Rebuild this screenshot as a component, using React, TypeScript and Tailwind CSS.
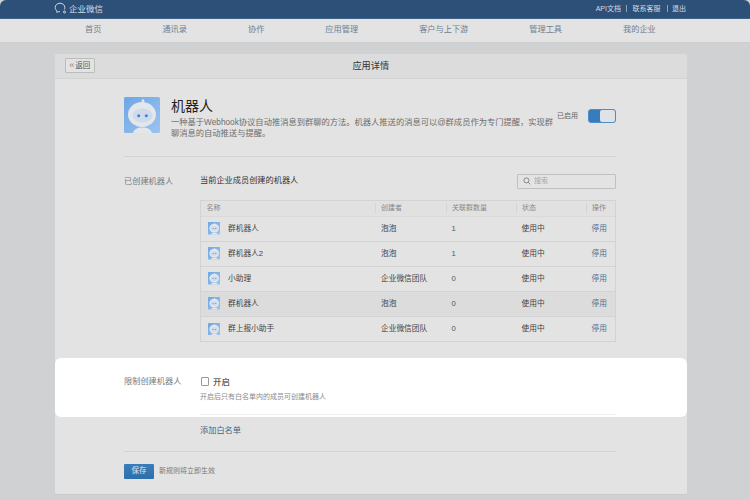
import React from "react";

const F = "font-['Liberation_Sans','Noto_Sans_CJK_SC',sans-serif]";

function Robot({ size, className = "" }: { size: number; className?: string }) {
  return (
    <svg width={size} height={size} viewBox="0 0 36 36" className={className}>
      <defs>
        <linearGradient id="rb" x1="0" y1="0" x2="1" y2="1">
          <stop offset="0" stopColor="#6ea6e6" />
          <stop offset="1" stopColor="#9cc3ee" />
        </linearGradient>
      </defs>
      <rect width="36" height="36" rx="1.5" fill="url(#rb)" />
      <circle cx="19" cy="3.700" r="1.500" fill="#e3e6ea" />
      <rect x="18.600" y="4.500" width="0.800" height="2" fill="#e3e6ea" />
      <path d="M9 36c1-3.500 4-5.500 9.500-5.500s8.500 2 9.500 5.500z" fill="#e3e6ea" />
      <ellipse cx="18" cy="17.500" rx="14" ry="12.500" fill="#e3e6ea" />
      <ellipse cx="18.500" cy="18.500" rx="10" ry="7" fill="#cfdbea" />
      <circle cx="14.700" cy="18.700" r="1.500" fill="#3f80dc" />
      <circle cx="22.300" cy="18.700" r="1.500" fill="#3f80dc" />
    </svg>
  );
}

const rows = [
  { name: "群机器人", by: "泡泡", n: "1", hl: false },
  { name: "群机器人2", by: "泡泡", n: "1", hl: false },
  { name: "小助理", by: "企业微信团队", n: "0", hl: false },
  { name: "群机器人", by: "泡泡", n: "0", hl: true },
  { name: "群上报小助手", by: "企业微信团队", n: "0", hl: false },
];

const nav = ["首页", "通讯录", "协作", "应用管理", "客户与上下游", "管理工具", "我的企业"];

export default function App() {
  return (
    <div className={`${F} relative w-[750px] h-[500px] overflow-hidden bg-[#d0d1d3] text-[8.200px] leading-[12px] text-[#3b3b3b]`}>
      <header className="h-[18.500px] bg-[#2c5078] rounded-t-[6px] flex items-center justify-between pl-[54px] pr-[64px] border-b border-[#3f6288]">
        <div className="flex items-center gap-[1px] text-[#d5dbe3] text-[8.500px]">
          <svg width="14" height="13" viewBox="0 0 14 13" fill="none" stroke="#d5dbe3" strokeWidth="1">
            <path d="M6 1.200c-2.700 0-4.800 1.900-4.800 4.300 0 1.400.7 2.600 1.800 3.400l-.2 1.500 1.700-.8c.5.100 1 .2 1.500.2" />
            <path d="M6 1.200c2.700 0 4.800 1.900 4.800 4.300 0 .7-.2 1.400-.5 2" />
            <circle cx="10.500" cy="10" r="1" />
          </svg>
          <span>企业微信</span>
        </div>
        <div className="flex items-center text-[#d5dbe3] text-[7px]">
          <span>API文档</span>
          <span className="ml-[4.500px] mr-[6px] w-px h-[7px] bg-[#8ea3bb]" />
          <span>联系客服</span>
          <span className="ml-[6px] mr-[4.500px] w-px h-[7px] bg-[#8ea3bb]" />
          <span>退出</span>
        </div>
      </header>
      <nav className="h-[24px] bg-[#e3e3e3] border-b border-[#cdcecf] flex items-center gap-[61px] pl-[85px] text-[8.200px] text-[#6f7e92]">
        {nav.map((t) => (
          <div key={t} className="shrink-0">{t}</div>
        ))}
      </nav>
      <main className="mx-[55px] mt-[11.500px] w-[631.500px] h-[441px] bg-[#e3e3e3] rounded-[2px] border-b border-[#c9cacc]">
        <div className="relative h-[24.500px] bg-[#dcdcdc] border-b border-[#d3d3d3] flex items-center justify-center rounded-t-[2px]">
          <div className="absolute left-[10px] top-[4px] h-[15px] w-[29.500px] border border-[#bdbdbd] rounded-[1px] flex items-center justify-center text-[7.500px] text-[#555] bg-[#e3e3e3]">
            <span className="text-[#888] text-[9px] leading-[9px] mr-[1px]">«</span>返回
          </div>
          <span className="text-[9.200px] text-[#333]">应用详情</span>
        </div>
        <div className="pl-[69px] pr-[70.500px]">
          <div className="pt-[18.500px] h-[78.500px] border-b border-[#d3d3d3] flex">
            <Robot size={36} className="shrink-0" />
            <div className="ml-[11px] w-[383px] shrink-0">
              <div className="text-[14px] leading-[17px] text-[#222] mt-[1px]">机器人</div>
              <div className="text-[8.270px] leading-[11.500px] text-[#6d6d6d] mt-[1.500px]">
                一种基于Webhook协议自动推消息到群聊的方法。机器人推送的消息可以@群成员作为专门提醒，实现群聊消息的自动推送与提醒。
              </div>
            </div>
            <div className="text-[7px] text-[#666] ml-[3px] mt-[13px] shrink-0">已启用</div>
            <div className="ml-[9.500px] mt-[11.500px] w-[28px] h-[14px] rounded-[3px] bg-[#377cbc] border border-[#4f8cc6] flex justify-end shrink-0">
              <div className="w-[15px] h-full rounded-[2px] bg-[#dfe3e8]" />
            </div>
          </div>
          <div className="flex pt-[16px]">
            <div className="w-[76px] shrink-0 pt-[2.500px] text-[#7a7a7a]">已创建机器人</div>
            <div className="w-[416px]">
              <div className="flex items-center justify-between h-[16px]">
                <span className="text-[#333]">当前企业成员创建的机器人</span>
                <div className="w-[99px] h-[15px] border border-[#bfc0c2] rounded-[1px] flex items-center pl-[5px] gap-[3px] text-[7px] text-[#aaa]">
                  <svg width="8" height="8" viewBox="0 0 8 8" fill="none" stroke="#888" strokeWidth="1">
                    <circle cx="3.400" cy="3.400" r="2.500" />
                    <path d="M5.300 5.300 7.300 7.300" />
                  </svg>
                  搜索
                </div>
              </div>
              <div className="mt-[11px] border border-[#d3d3d3] border-b-[#d3d3d3] h-[142px]">
                <div className="h-[15.500px] flex items-center bg-[#e1e1e1] border-b border-[#dadada] text-[7px] text-[#888]">
                  <div className="w-[174.500px] pl-[5.500px] border-r border-[#d3d3d3] h-[10px] leading-[10px]">名称</div>
                  <div className="w-[71px] pl-[5.500px] border-r border-[#d3d3d3] h-[10px] leading-[10px]">创建者</div>
                  <div className="w-[70px] pl-[5.500px] border-r border-[#d3d3d3] h-[10px] leading-[10px]">关联群数量</div>
                  <div className="w-[70px] pl-[5.500px] border-r border-[#d3d3d3] h-[10px] leading-[10px]">状态</div>
                  <div className="pl-[5.500px] h-[10px] leading-[10px]">操作</div>
                </div>
                {rows.map((r, i) => (
                  <div key={i} className={`h-[25px] flex items-center border-b border-[#d3d3d3] last:border-b-0 text-[7.700px] ${r.hl ? "bg-[#dcdcdc]" : ""}`}>
                    <div className="w-[174.500px] pl-[6.500px] flex items-center text-[#444]">
                      <Robot size={12.500} className="shrink-0" />
                      <span className="ml-[8px]">{r.name}</span>
                    </div>
                    <div className="w-[71px] pl-[5.500px] text-[#444]">{r.by}</div>
                    <div className="w-[70px] pl-[5px] text-[#555]">{r.n}</div>
                    <div className="w-[70px] pl-[5px] text-[#444]">使用中</div>
                    <div className="pl-[5px] text-[#4a7396]">停用</div>
                  </div>
                ))}
              </div>
            </div>
          </div>
        </div>
        <section className="mt-[16px] h-[59px] bg-white rounded-[6px] pl-[69px] pr-[70.500px] pt-[16.500px] flex">
          <div className="w-[76px] shrink-0 text-[#7a7a7a] pt-[1px]">限制创建机器人</div>
          <div className="w-[416px] h-[40px] border-b border-[#eeeeee]">
            <div className="flex items-center h-[14px]">
              <span className="w-[8.500px] h-[8.500px] ml-[0.500px] border border-[#999] rounded-[1px] bg-white" />
              <span className="ml-[4px] text-[8.500px] text-[#222]">开启</span>
            </div>
            <div className="mt-[2.500px] text-[7px] text-[#8a8a8a]">开启后只有白名单内的成员可创建机器人</div>
          </div>
        </section>
        <div className="pl-[69px] pr-[70.500px]">
          <div className="pl-[76px] h-[34px] flex items-center text-[#3f6488] pb-[6px]">添加白名单</div>
          <div className="border-t border-[#d3d3d3] pt-[11.500px] flex items-center">
            <div className="w-[30px] h-[15.500px] rounded-[1px] bg-gradient-to-b from-[#3a7dbb] to-[#2f6fab] text-[#dfe6ee] text-[7.500px] flex items-center justify-center">保存</div>
            <span className="ml-[5px] text-[7px] text-[#777]">新规则将立即生效</span>
          </div>
        </div>
      </main>
    </div>
  );
}
